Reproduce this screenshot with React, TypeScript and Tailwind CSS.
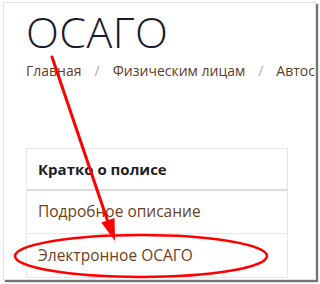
const rows = ["Подробное описание", "Электронное ОСАГО"]

const App = () => {
    return (
        <div className="relative w-[320px] h-[284px] bg-white overflow-hidden font-['Open_Sans',sans-serif]">
            <div className="ml-[3px] mt-[2px] w-[313px] h-[278px] overflow-hidden border border-[#e2e2e2] bg-white shadow-[2px_2px_1px_rgba(0,0,0,0.55)] pl-[22px] pt-[1px]">
                <h1 className="text-[43px] leading-[56px] font-light text-[#1a1a2e] tracking-[0.5px]">ОСАГО</h1>

                <nav className="mt-[1px] flex items-center text-[14px] leading-[20px] text-[#5e3b2c] whitespace-nowrap">
                    <span>Главная</span>
                    <span className="mx-[13px] text-[#aaa]">/</span>
                    <span>Физическим лицам</span>
                    <span className="mx-[13px] text-[#aaa]">/</span>
                    <span>Автострахование</span>
                </nav>

                <div className="mt-[67px] w-[262px] border border-[#e6e6e6]">
                    <div className="h-[42px] flex items-center px-[11px] border-b-2 border-[#dcdcdc] text-[15px] font-bold text-[#1d1d28]">
                        Кратко о полисе
                    </div>
                    {rows.map((r, i) => (
                        <div
                            key={r}
                            className={`h-[43px] flex items-center px-[11px] text-[15.5px] text-[#6b3f22] ${i === 0 ? "border-b border-[#e6e6e6]" : ""}`}
                        >
                            {r}
                        </div>
                    ))}
                </div>
            </div>

            {/* hand-drawn annotation */}
            <svg className="absolute inset-0 pointer-events-none" width="320" height="284" viewBox="0 0 320 284">
                <line x1="52" y1="57" x2="110" y2="228" stroke="#f00" strokeWidth="3" strokeLinecap="round" />
                <polygon points="115,241 101.3,222.5 114.5,217.9" fill="#f00" />
                <ellipse cx="141" cy="256" rx="126" ry="21" fill="none" stroke="#f00" strokeWidth="2.5" />
            </svg>
        </div>
    )
}

export default App
